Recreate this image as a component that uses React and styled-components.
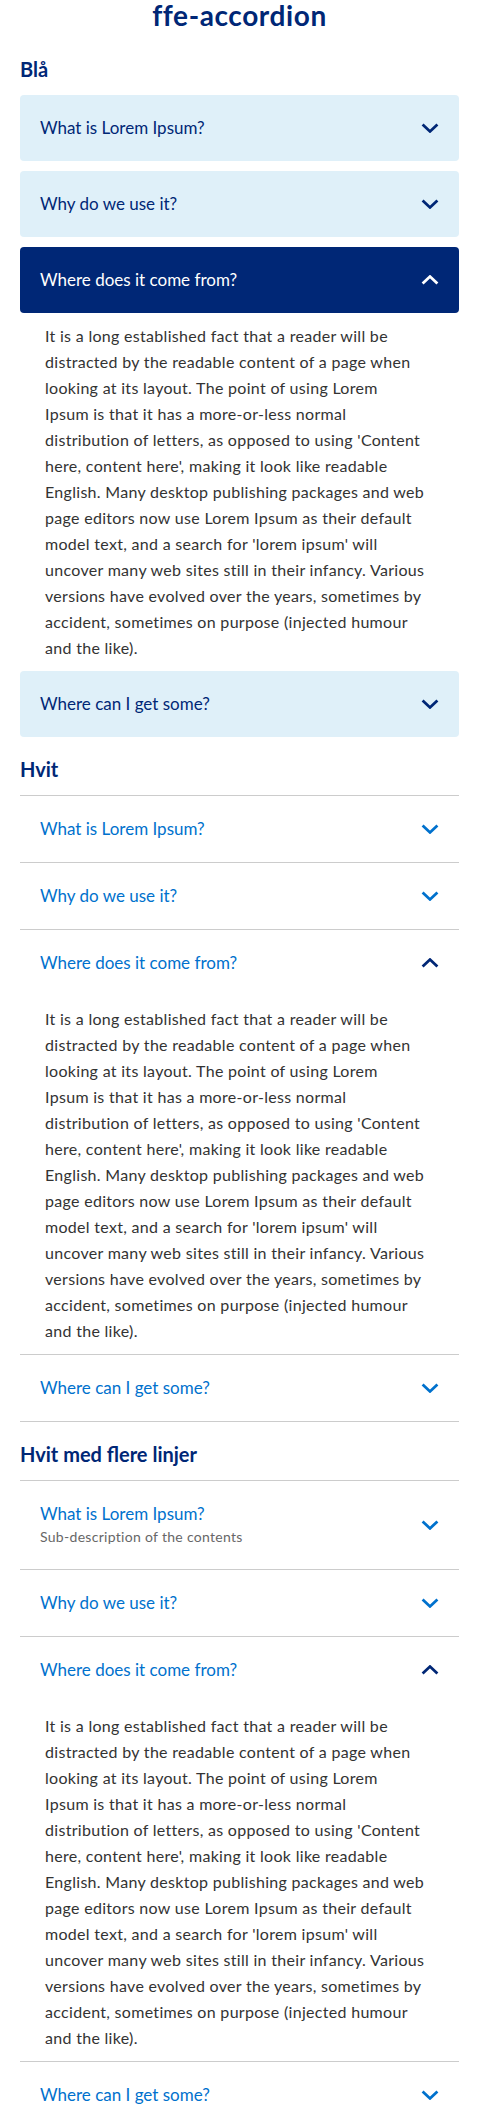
import React, { useState } from 'react';
import styled, { createGlobalStyle, css } from 'styled-components';

const GlobalStyle = createGlobalStyle`
  body {
    margin: 0;
    background: #ffffff;
    font-family: Lato, "Open Sans", sans-serif;
    color: #333333;
  }
`;

const FJELL = '#002776';
const VANN = '#0071cd';
const FROST = '#dff0f9';
const BORDER = '#cccccc';

// Broken the same way the original renders it, so the panel height matches
const LOREM_LINES = [
  'It is a long established fact that a reader will be',
  'distracted by the readable content of a page when',
  'looking at its layout. The point of using Lorem',
  'Ipsum is that it has a more-or-less normal',
  "distribution of letters, as opposed to using 'Content",
  "here, content here', making it look like readable",
  'English. Many desktop publishing packages and web',
  'page editors now use Lorem Ipsum as their default',
  "model text, and a search for 'lorem ipsum' will",
  'uncover many web sites still in their infancy. Various',
  'versions have evolved over the years, sometimes by',
  'accident, sometimes on purpose (injected humour',
  'and the like).',
];

const sections = [
  { title: 'Blå', variant: 'blue', subtitle: false },
  { title: 'Hvit', variant: 'white', subtitle: false },
  { title: 'Hvit med flere linjer', variant: 'white', subtitle: true },
];

const questions = [
  'What is Lorem Ipsum?',
  'Why do we use it?',
  'Where does it come from?',
  'Where can I get some?',
];

const Page = styled.main`
  display: flex;
  flex-direction: column;
  padding: 0 20px;
`;

const Title = styled.h1`
  margin: 0 0 7px;
  text-align: center;
  font-size: 28px;
  line-height: 30px;
  font-weight: 700;
  letter-spacing: 0.6px;
  color: ${FJELL};
`;

const Section = styled.section`
  margin-top: 18px;
`;

const SectionHeading = styled.h2`
  margin: 0 0 12px;
  font-size: 20px;
  line-height: 28px;
  font-weight: 700;
  color: ${FJELL};
`;

const List = styled.div`
  display: flex;
  flex-direction: column;
  gap: ${(p) => (p.$variant === 'blue' ? '10px' : '0')};
  ${(p) =>
    p.$variant === 'white' &&
    css`
      border-bottom: 1px solid ${BORDER};
    `}
`;

const Item = styled.div`
  ${(p) =>
    p.$variant === 'white' &&
    css`
      border-top: 1px solid ${BORDER};
    `}
`;

const Header = styled.button`
  appearance: none;
  border: 0;
  width: 100%;
  margin: 0;
  display: flex;
  align-items: center;
  justify-content: space-between;
  gap: 16px;
  padding: 21px 20px;
  text-align: left;
  font-family: inherit;
  cursor: pointer;
  border-radius: ${(p) => (p.$variant === 'blue' ? '4px' : '0')};
  background: ${(p) =>
    p.$variant === 'blue' ? (p.$open ? FJELL : FROST) : 'transparent'};
  color: ${(p) =>
    p.$variant === 'blue' ? (p.$open ? '#ffffff' : FJELL) : VANN};
`;

const HeadText = styled.span`
  display: flex;
  flex-direction: column;
`;

const Question = styled.span`
  font-size: 17px;
  line-height: 24px;
`;

const SubText = styled.span`
  font-size: 14px;
  line-height: 22px;
  letter-spacing: 0.3px;
  color: #676767;
`;

const Chevron = styled.svg`
  flex: none;
  width: 18px;
  height: 10px;
  color: ${(p) => {
    if (p.$variant === 'blue') return p.$open ? '#ffffff' : FJELL;
    return p.$open ? FJELL : VANN;
  }};
  transform: ${(p) => (p.$open ? 'rotate(180deg)' : 'none')};
`;

const Panel = styled.div`
  padding: ${(p) => (p.$variant === 'blue' ? '10px 20px 0 25px' : '10px 20px 10px 25px')};
  font-size: 16px;
  line-height: 26px;
  letter-spacing: 0.3px;
  color: #333333;
`;

const Line = styled.span`
  display: block;
  white-space: nowrap;
`;

function AccordionItem({ variant, question, subtitle, open, onToggle }) {
  return (
    <Item $variant={variant}>
      <Header $variant={variant} $open={open} onClick={onToggle} aria-expanded={open}>
        <HeadText>
          <Question>{question}</Question>
          {subtitle && <SubText>Sub-description of the contents</SubText>}
        </HeadText>
        <Chevron $variant={variant} $open={open} viewBox="0 0 18 10" aria-hidden="true">
          <polyline
            points="1.6,1.4 9,8.4 16.4,1.4"
            fill="none"
            stroke="currentColor"
            strokeWidth="2.8"
          />
        </Chevron>
      </Header>
      {open && (
        <Panel $variant={variant}>
          {LOREM_LINES.map((line) => (
            <Line key={line}>{line}</Line>
          ))}
        </Panel>
      )}
    </Item>
  );
}

function Accordion({ variant, subtitle }) {
  const [openIndex, setOpenIndex] = useState(2);

  return (
    <List $variant={variant}>
      {questions.map((q, i) => (
        <AccordionItem
          key={q}
          variant={variant}
          question={q}
          subtitle={subtitle && i === 0}
          open={openIndex === i}
          onToggle={() => setOpenIndex(openIndex === i ? -1 : i)}
        />
      ))}
    </List>
  );
}

export default function App() {
  return (
    <>
      <GlobalStyle />
      <Page>
        <Title>ffe-accordion</Title>
        {sections.map((s) => (
          <Section key={s.title}>
            <SectionHeading>{s.title}</SectionHeading>
            <Accordion variant={s.variant} subtitle={s.subtitle} />
          </Section>
        ))}
      </Page>
    </>
  );
}
